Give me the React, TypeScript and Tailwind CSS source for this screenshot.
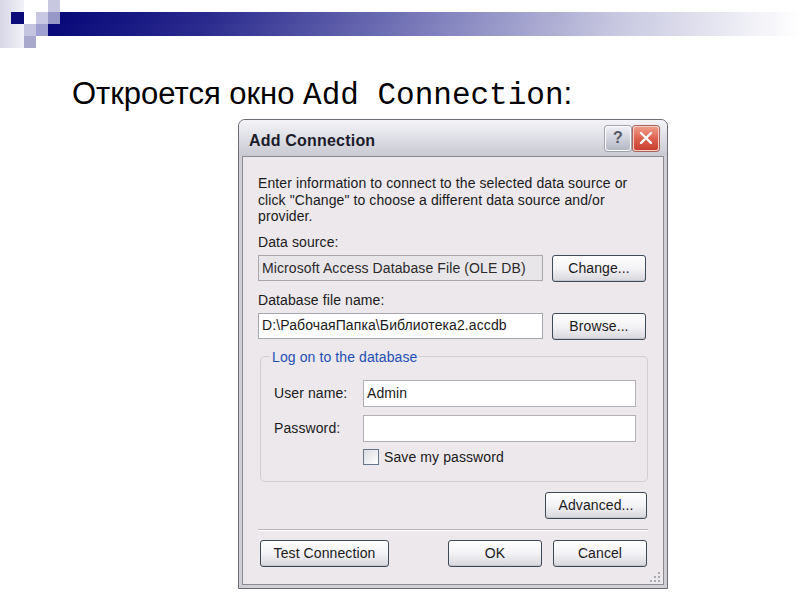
import React from "react";
import clsx from "clsx";

function XpButton({ children, className }: { children: React.ReactNode; className?: string }) {
  return (
    <div
      className={clsx(
        "flex h-[27px] items-center justify-center rounded-[3px] border border-[#3f4a58] bg-linear-to-b from-white via-[#f3f2f5] to-[#d8d7dd] text-[14px] tracking-[0.1px] text-[#1a1a1a] shadow-[inset_0_-1px_0_#c6c5cc]",
        className,
      )}
    >
      {children}
    </div>
  );
}

function Decoration() {
  return (
    <svg width="800" height="48" viewBox="0 0 800 48" className="block">
      <defs>
        <linearGradient id="bar" x1="0" x2="1" y1="0" y2="0">
          <stop offset="0" stopColor="#08087a" />
          <stop offset="0.2" stopColor="#2a2a8e" />
          <stop offset="0.45" stopColor="#6e6eb4" />
          <stop offset="0.75" stopColor="#c6c6e0" />
          <stop offset="1" stopColor="#ffffff" />
        </linearGradient>
        <linearGradient id="pale" x1="0" x2="1" y1="0" y2="0">
          <stop offset="0" stopColor="#d6d6e6" />
          <stop offset="1" stopColor="#f2f2f8" />
        </linearGradient>
      </defs>
      <rect x="0" y="0" width="24" height="48" fill="url(#pale)" />
      <rect x="11" y="12" width="13" height="12" fill="#0a0a78" />
      <rect x="36" y="12" width="12" height="12" fill="#c8c8e4" />
      <rect x="48" y="0" width="12" height="12" fill="#c8c8e0" />
      <rect x="48" y="12" width="12" height="12" fill="#9898c8" />
      <rect x="24" y="24" width="12" height="12" fill="#c4c4e0" />
      <rect x="36" y="24" width="12" height="12" fill="#a0a0d0" />
      <rect x="24" y="36" width="12" height="12" fill="#a8a8cc" />
      <rect x="60" y="12" width="740" height="12" fill="url(#bar)" />
      <rect x="48" y="24" width="752" height="12" fill="url(#bar)" />
    </svg>
  );
}

export default function App() {
  return (
    <div className="h-[600px] w-[800px] overflow-hidden bg-white">
      <Decoration />

      <div className="ml-[72px] mt-[30px] h-[31px] whitespace-nowrap text-[31px] leading-[31px] text-black font-['Liberation_Sans',Arial,sans-serif]">
        Откроется окно <span className="font-['Liberation_Mono',monospace]">Add Connection</span>:
      </div>

      <div className="ml-[238px] mt-[10px] w-[430px] rounded-t-[7px] border border-[#6c6c72] bg-[#cfcfd5] font-['Liberation_Sans',Tahoma,sans-serif] text-[#1a1a1a]">
        <div className="flex h-[36px] items-center justify-between rounded-t-[6px] bg-linear-to-b from-[#f4f4f8] via-[#dedee6] to-[#c9c9d2] pl-[10px] pr-[8px]">
          <span className="mt-[6px] text-[16px] font-bold tracking-[0.2px] text-[#1c1c2a]">Add Connection</span>
          <div className="flex gap-[2px]">
            <div className="flex h-[25px] w-[26px] items-center justify-center rounded-[3px] border border-white bg-linear-to-b from-[#eeeef4] to-[#b4b8c6] text-[16px] font-bold text-[#555a66] shadow-[0_0_0_1px_#9ea2ae]">
              ?
            </div>
            <div className="flex h-[25px] w-[26px] items-center justify-center rounded-[3px] border border-[#f4d0c8] bg-linear-to-b from-[#ee9a88] via-[#de6150] to-[#c8402f] shadow-[0_0_0_1px_#b06058]">
              <svg width="14" height="14" viewBox="0 0 14 14">
                <path d="M2 2 L12 12 M12 2 L2 12" stroke="white" strokeWidth="2.4" strokeLinecap="round" />
              </svg>
            </div>
          </div>
        </div>

        <div className="mx-[3px] mb-[3px] border border-[#8a8a90] bg-[#ece8ec]">
          <div className="flex flex-col pl-[15px] pr-[16px] pt-[18px] text-[14px] leading-[16.5px] tracking-[0.1px]">
            <p>
              Enter information to connect to the selected data source or
              <br />
              click "Change" to choose a different data source and/or
              <br />
              provider.
            </p>

            <p className="mt-[9px]">Data source:</p>
            <div className="mt-[5px] flex items-start gap-[9px]">
              <div className="flex h-[26px] w-[285px] items-center border border-[#a6a6ac] bg-[#e9e6ea] px-[3px] text-[#2a2a2a]">
                Microsoft Access Database File (OLE DB)
              </div>
              <XpButton className="w-[94px]">Change...</XpButton>
            </div>

            <p className="mt-[10px]">Database file name:</p>
            <div className="mt-[4px] flex items-start gap-[9px]">
              <div className="flex h-[26px] w-[285px] items-center border border-[#a6a6ac] bg-white px-[3px]">
                D:\РабочаяПапка\Библиотека2.accdb
              </div>
              <XpButton className="w-[94px]">Browse...</XpButton>
            </div>

            <fieldset className="ml-[2px] mt-[9px] w-[388px] rounded-[5px] border border-[#cfcfd4] pb-[15px] pl-[13px] pr-[10px]">
              <legend className="ml-[-4px] px-[2px] text-[#1f4fb4]">Log on to the database</legend>
              <div className="mt-[15px] flex items-center">
                <span className="w-[89px]">User name:</span>
                <div className="flex h-[27px] w-[273px] items-center border border-[#b0b0b6] bg-white px-[3px]">Admin</div>
              </div>
              <div className="mt-[8px] flex items-center">
                <span className="w-[89px]">Password:</span>
                <div className="h-[27px] w-[273px] border border-[#b0b0b6] bg-white" />
              </div>
              <div className="mt-[7px] flex items-center pl-[89px]">
                <div className="h-[16px] w-[16px] border border-[#66768a] bg-linear-to-br from-[#dcdce2] to-white" />
                <span className="ml-[5px]">Save my password</span>
              </div>
            </fieldset>

            <div className="mt-[10px] flex justify-end">
              <XpButton className="w-[102px]">Advanced...</XpButton>
            </div>

            <div className="mr-[-1px] mt-[10px] h-[2px] border-b border-t border-b-white border-t-[#b6b6bc]" />

            <div className="mt-[9px] flex items-center">
              <XpButton className="ml-[2px] w-[129px]">Test Connection</XpButton>
              <XpButton className="ml-auto w-[94px]">OK</XpButton>
              <XpButton className="ml-[11px] w-[94px]">Cancel</XpButton>
            </div>

            <div className="mr-[-14px] mt-[4px] flex justify-end pb-[1px]">
              <svg width="12" height="12" viewBox="0 0 12 12">
                <rect x="9" y="1" width="2" height="2" fill="#a8a8b0" />
                <rect x="5" y="5" width="2" height="2" fill="#a8a8b0" />
                <rect x="9" y="5" width="2" height="2" fill="#a8a8b0" />
                <rect x="1" y="9" width="2" height="2" fill="#a8a8b0" />
                <rect x="5" y="9" width="2" height="2" fill="#a8a8b0" />
                <rect x="9" y="9" width="2" height="2" fill="#a8a8b0" />
              </svg>
            </div>
          </div>
        </div>
      </div>
    </div>
  );
}
